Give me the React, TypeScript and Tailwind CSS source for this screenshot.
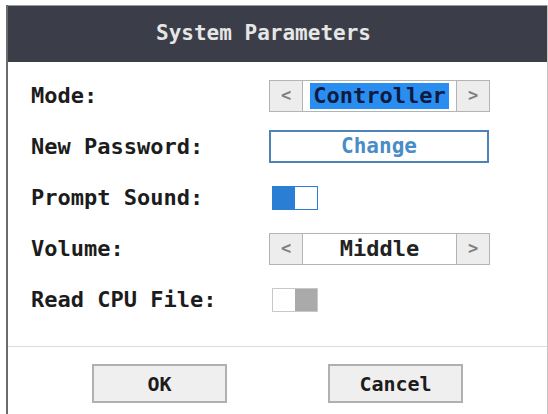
import React from 'react';

const mono = { fontFamily: '"DejaVu Sans Mono", "Liberation Mono", monospace' };

function Spinner({ value, selected }: { value: string; selected?: boolean }) {
  return (
    <div className="flex h-[32px] w-[221px] border border-[#b4b4b4] bg-white">
      <div className="flex w-[33px] items-center justify-center border-r border-[#b4b4b4] bg-[#ededed] text-[17px] font-bold text-[#808080]">
        &lt;
      </div>
      <div className="flex flex-1 items-center justify-center">
        <span
          className={
            selected
              ? 'bg-[#2a8ef0] px-[3px] text-[22px] font-bold leading-[26px] text-[#101a40]'
              : 'text-[22px] font-bold leading-[26px] text-[#222]'
          }
        >
          {value}
        </span>
      </div>
      <div className="flex w-[33px] items-center justify-center border-l border-[#b4b4b4] bg-[#ededed] text-[17px] font-bold text-[#808080]">
        &gt;
      </div>
    </div>
  );
}

function Toggle({ on }: { on: boolean }) {
  return on ? (
    <div className="ml-[3px] flex h-[24px] w-[46px] border border-[#2a7fd4]">
      <div className="w-[22px] bg-[#2a7fd4]" />
      <div className="flex-1 bg-white" />
    </div>
  ) : (
    <div className="ml-[3px] flex h-[24px] w-[46px] border border-[#c8c8c8]">
      <div className="flex-1 bg-white" />
      <div className="w-[22px] bg-[#aaaaaa]" />
    </div>
  );
}

export default function App() {
  const rows: { label: string; control: React.ReactNode }[] = [
    { label: 'Mode:', control: <Spinner value="Controller" selected /> },
    {
      label: 'New Password:',
      control: (
        <div className="flex h-[33px] w-[220px] items-center justify-center border-2 border-[#4f82b8] text-[21px] font-bold text-[#4a8cc8]">
          Change
        </div>
      ),
    },
    { label: 'Prompt Sound:', control: <Toggle on /> },
    { label: 'Volume:', control: <Spinner value="Middle" /> },
    { label: 'Read CPU File:', control: <Toggle on={false} /> },
  ];

  return (
    <div className="h-[414px] w-[548px] overflow-hidden bg-white pl-[6px] pt-[5px]" style={mono}>
      <div className="h-[420px] border-l-2 border-r border-l-[#6b6b6b] border-r-[#c4c4c4] bg-white">
        {/* Header */}
        <div className="flex h-[57px] items-center justify-center border-t border-[#9a9a9a] bg-[#3b3e49] pr-[28px]">
          <span className="text-[21px] font-bold text-[#e6e6e6]">System Parameters</span>
        </div>

        {/* Rows */}
        <div className="pl-[23px] pt-[8px] pb-[21px]">
          {rows.map((r) => (
            <div key={r.label} className="flex h-[51px] items-center">
              <div className="w-[238px] text-[22px] font-bold text-[#1c1c1c]">{r.label}</div>
              {r.control}
            </div>
          ))}
        </div>

        {/* Footer */}
        <div className="flex border-t border-[#dcdcdc] pt-[17px]">
          <div className="ml-[84px] flex h-[39px] w-[135px] items-center justify-center border-2 border-[#b0b0b0] bg-[#efefef] text-[20px] font-bold text-[#1c1c1c]">
            OK
          </div>
          <div className="ml-[101px] flex h-[39px] w-[135px] items-center justify-center border-2 border-[#b0b0b0] bg-[#efefef] text-[20px] font-bold text-[#1c1c1c]">
            Cancel
          </div>
        </div>
      </div>
    </div>
  );
}
